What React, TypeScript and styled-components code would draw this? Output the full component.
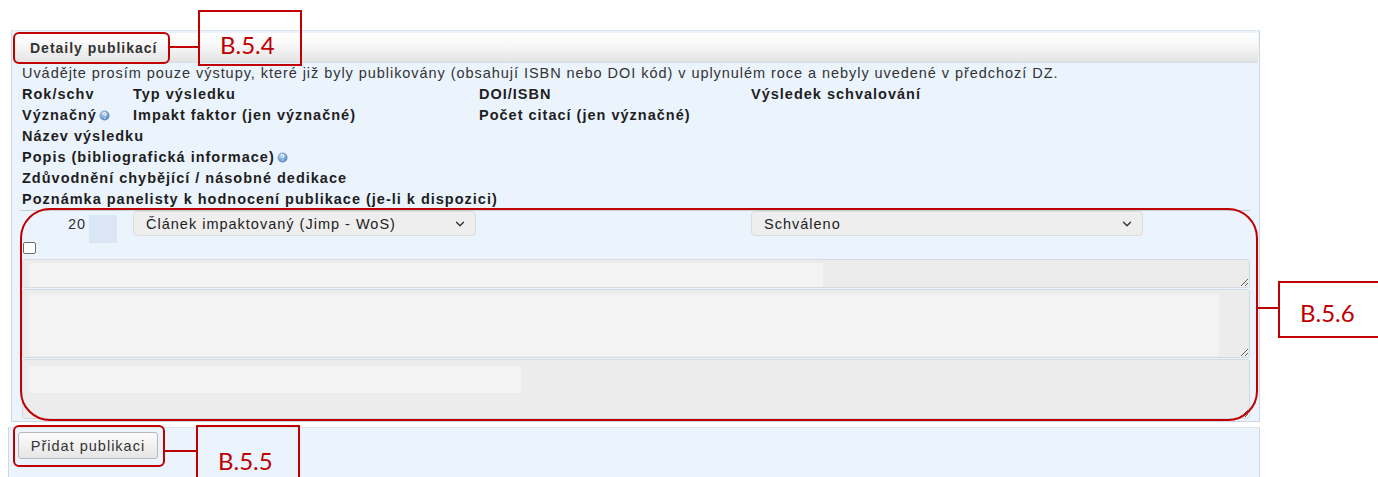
import styled, { createGlobalStyle } from "styled-components";
import { ChevronDown } from "lucide-react";

const GlobalStyle = createGlobalStyle`
  html, body {
    margin: 0;
    padding: 0;
    background: #fff;
  }
  body {
    font-family: "Liberation Sans", Arial, sans-serif;
    color: #222;
  }
  * {
    box-sizing: border-box;
  }
`;

const RED = "#c00000";

function InfoIcon() {
  return (
    <svg width="11" height="11" viewBox="0 0 11 11" style={{ marginLeft: 2, verticalAlign: -1 }}>
      <defs>
        <radialGradient id="ig" cx="40%" cy="35%" r="70%">
          <stop offset="0%" stopColor="#b9d3ef" />
          <stop offset="100%" stopColor="#4f82bd" />
        </radialGradient>
      </defs>
      <circle cx="5.5" cy="5.5" r="5" fill="url(#ig)" />
      <path d="M4 4.3c0-1 .7-1.5 1.5-1.5s1.5.5 1.5 1.3c0 .9-1.2 1-1.2 2" stroke="#fff" strokeWidth="1.1" fill="none" />
      <circle cx="5.8" cy="8.1" r="0.7" fill="#fff" />
    </svg>
  );
}

export default function App() {
  return (
    <>
      <GlobalStyle />
      <Page>
        <UpperPanel>
          <Header>
            <HeaderTitle>Detaily publikací</HeaderTitle>
          </Header>
          <Body>
            <Intro>
              Uvádějte prosím pouze výstupy, které již byly publikovány (obsahují ISBN nebo DOI kód) v
              uplynulém roce a nebyly uvedené v předchozí DZ.
            </Intro>
            <LabelGrid>
              <span>Rok/schv</span>
              <span>Typ výsledku</span>
              <span>DOI/ISBN</span>
              <span>Výsledek schvalování</span>
              <span>
                Význačný
                <InfoIcon />
              </span>
              <span>Impakt faktor (jen význačné)</span>
              <span>Počet citací (jen význačné)</span>
              <span />
              <Wide>Název výsledku</Wide>
              <Wide>
                Popis (bibliografická informace)
                <InfoIcon />
              </Wide>
              <Wide>Zdůvodnění chybějící / násobné dedikace</Wide>
              <Wide>Poznámka panelisty k hodnocení publikace (je-li k dispozici)</Wide>
            </LabelGrid>
            <DataRow>
              <YearCell>
                <YearText>20</YearText>
                <YearInput type="text" />
              </YearCell>
              <SelectWrap $width={343}>
                <Select defaultValue="jimp">
                  <option value="jimp">Článek impaktovaný (Jimp - WoS)</option>
                </Select>
                <Chevron size={14} strokeWidth={2.4} />
              </SelectWrap>
              <span />
              <SelectWrap $width={392}>
                <Select defaultValue="ok">
                  <option value="ok">Schváleno</option>
                </Select>
                <Chevron size={14} strokeWidth={2.4} />
              </SelectWrap>
            </DataRow>
            <CheckRow>
              <Check type="checkbox" />
            </CheckRow>
            <Area $h={29} $fx={6} $fy={3} $fw={794} $fh={24} />
            <Area $h={69} $fx={6} $fy={4} $fw={1190} $fh={62} />
            <Area $h={60} $fx={6} $fy={6} $fw={492} $fh={27} />
          </Body>
        </UpperPanel>

        <LowerPanel>
          <AddButton>Přidat publikaci</AddButton>
        </LowerPanel>

        <Ring $x={13} $y={32} $w={157} $h={32} $r={6} />
        <Leader $x={170} $y={46} $w={28} />
        <Tag $x={198} $y={10} $w={104} $h={56} $pt={21}>
          B.5.4
        </Tag>

        <Ring $x={20} $y={208} $w={1238} $h={213} $r={30} />
        <Leader $x={1258} $y={307} $w={20} />
        <Tag $x={1278} $y={281} $w={110} $h={57} $pt={18}>
          B.5.6
        </Tag>

        <Ring $x={13} $y={425} $w={152} $h={42} $r={6} />
        <Leader $x={165} $y={450} $w={31} />
        <Tag $x={196} $y={425} $w={104} $h={60} $pt={22}>
          B.5.5
        </Tag>
      </Page>
    </>
  );
}

const Page = styled.div`
  position: relative;
  width: 1378px;
  height: 477px;
  overflow: hidden;
  padding-top: 30px;
  background: #fff;
`;

const UpperPanel = styled.section`
  margin-left: 11px;
  width: 1249px;
  padding-top: 2px;
  background: #ebf3fd;
  border: 1px solid #cfd7e0;
  border-top-color: #dde4ec;
`;

const Header = styled.div`
  display: flex;
  align-items: center;
  height: 30px;
  margin: 0 1px;
  padding-left: 17px;
  background: linear-gradient(#ffffff, #f7f7f7 45%, #e3e3e3);
  border-bottom: 1px solid #d9dde2;
`;

const HeaderTitle = styled.h2`
  margin: 0;
  font-size: 14px;
  letter-spacing: 1px;
  font-weight: bold;
  color: #333;
`;

const Body = styled.div`
  padding: 0 9px 1px 10px;
`;

const Intro = styled.p`
  margin: 0;
  font-size: 14.5px;
  letter-spacing: 0.95px;
  line-height: 21px;
  color: #333;
  white-space: nowrap;
`;

const LabelGrid = styled.div`
  display: grid;
  grid-template-columns: 111px 346px 272px 1fr;
  font-size: 14.5px;
  letter-spacing: 1px;
  line-height: 21px;
  font-weight: bold;
  color: #1e1e1e;
  white-space: nowrap;
  border-bottom: 1px solid #c7ced6;
  margin-left: -2px;
  padding-left: 2px;
`;

const Wide = styled.span`
  grid-column: 1 / -1;
`;

const DataRow = styled.div`
  display: grid;
  grid-template-columns: 111px 346px 272px 1fr;
  align-items: start;
  height: 31px;
`;

const YearCell = styled.div`
  display: flex;
  align-items: flex-start;
  padding-left: 46px;
  gap: 3px;
`;

const YearText = styled.span`
  font-size: 14.5px;
  letter-spacing: 1px;
  line-height: 26px;
  color: #333;
`;

const YearInput = styled.input`
  width: 28px;
  height: 28px;
  margin-top: 4px;
  border: none;
  padding: 0;
  background: #dae6f3;
`;

const SelectWrap = styled.div<{ $width: number }>`
  position: relative;
  width: ${(p) => p.$width}px;
  height: 25px;
`;

const Select = styled.select`
  appearance: none;
  width: 100%;
  height: 100%;
  padding: 0 30px 0 12px;
  font-family: "Liberation Sans", Arial, sans-serif;
  font-size: 14.5px;
  letter-spacing: 1px;
  color: #222;
  background: #eeeeee;
  border: 1px solid #dcdcdc;
  border-radius: 4px;
  outline: none;
`;

const Chevron = styled(ChevronDown)`
  position: absolute;
  right: 9px;
  top: 6px;
  color: #333;
  pointer-events: none;
`;

const CheckRow = styled.div`
  height: 17px;
`;

const Check = styled.input`
  appearance: none;
  display: block;
  width: 13px;
  height: 12px;
  margin: 0 0 0 1px;
  background: #fff;
  border: 1px solid #6e6e6e;
  border-radius: 2px;
`;

const Area = styled.textarea<{ $h: number; $fx: number; $fy: number; $fw: number; $fh: number }>`
  display: block;
  width: 100%;
  height: ${(p) => p.$h}px;
  margin: 0 0 1px;
  border: 1px solid #d4dbe3;
  border-radius: 3px;
  resize: vertical;
  background:
    linear-gradient(#f3f3f3, #f3f3f3) no-repeat ${(p) => p.$fx}px ${(p) => p.$fy}px /
      ${(p) => p.$fw}px ${(p) => p.$fh}px,
    #ececec;
  outline: none;
`;

const LowerPanel = styled.section`
  margin: 5px 0 0 8px;
  width: 1252px;
  height: 60px;
  padding: 4px 9px;
  background: #ebf3fd;
  border: 1px solid #cfd7e0;
  border-top-color: #dde4ec;
  border-bottom: none;
`;

const AddButton = styled.button`
  width: 140px;
  height: 27px;
  padding: 0;
  font-family: "Liberation Sans", Arial, sans-serif;
  font-size: 14.5px;
  letter-spacing: 1px;
  color: #333;
  background: linear-gradient(#fbfbfb, #e6e6e6);
  border: 1px solid #b8b8b8;
  border-radius: 3px;
`;

const Ring = styled.div<{ $x: number; $y: number; $w: number; $h: number; $r: number }>`
  position: absolute;
  left: ${(p) => p.$x}px;
  top: ${(p) => p.$y}px;
  width: ${(p) => p.$w}px;
  height: ${(p) => p.$h}px;
  border: 2px solid ${RED};
  border-radius: ${(p) => p.$r}px;
  pointer-events: none;
`;

const Leader = styled.div<{ $x: number; $y: number; $w: number }>`
  position: absolute;
  left: ${(p) => p.$x}px;
  top: ${(p) => p.$y}px;
  width: ${(p) => p.$w}px;
  height: 2px;
  background: ${RED};
`;

const Tag = styled.div<{ $x: number; $y: number; $w: number; $h: number; $pt: number }>`
  position: absolute;
  left: ${(p) => p.$x}px;
  top: ${(p) => p.$y}px;
  width: ${(p) => p.$w}px;
  height: ${(p) => p.$h}px;
  padding: ${(p) => p.$pt}px 0 0 20px;
  border: 2px solid ${RED};
  font-family: Lato, "Open Sans", sans-serif;
  font-size: 24px;
  line-height: 1;
  color: ${RED};
`;
